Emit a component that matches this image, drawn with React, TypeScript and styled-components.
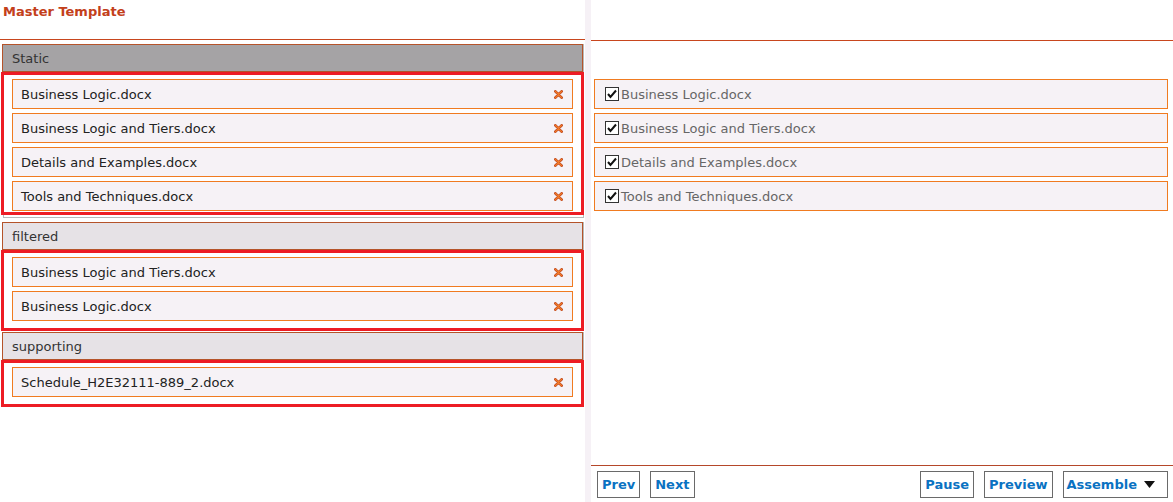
import React from "react";
import styled, { createGlobalStyle } from "styled-components";

const GlobalStyle = createGlobalStyle`
  html, body {
    margin: 0;
    padding: 0;
    background: #ffffff;
  }
  body {
    font-family: "DejaVu Sans", Verdana, sans-serif;
    font-size: 13px;
    color: #222;
  }
`;

const Page = styled.div`
  display: flex;
  height: 502px;
  width: 1173px;
  overflow: hidden;
`;

const LeftPanel = styled.div`
  width: 585px;
  flex-shrink: 0;
`;

const Divider = styled.div`
  width: 6px;
  flex-shrink: 0;
  background: #f6f1f6;
`;

const RightPanel = styled.div`
  flex: 1;
  display: flex;
  flex-direction: column;
`;

const TitleBar = styled.div`
  height: 40px;
  border-bottom: 1px solid #c8461e;
  padding: 4px 0 0 3px;
  box-sizing: border-box;
`;

const Title = styled.h1`
  margin: 0;
  font-size: 13px;
  font-weight: bold;
  color: #c3401b;
`;

const Section = styled.div<{ $first?: boolean }>`
  margin: ${(p) => (p.$first ? "4px 1px 4px 3px" : "0 1px 1px 3px")};
  padding-bottom: ${(p) => (p.$first ? "2px" : "0")};
  border-right: 1px solid #b8b8b8;
  border-left: 1px solid #b8b8b8;
  border-bottom: ${(p) => (p.$first ? "1px solid #b8b8b8" : "none")};
`;

const SectionHeader = styled.div<{ $dark?: boolean }>`
  height: 28px;
  box-sizing: border-box;
  margin-left: -2px;
  border: 1px solid #b5532a;
  background: ${(p) => (p.$dark ? "#a5a3a5" : "#e6e2e6")};
  color: #333;
  padding-left: 9px;
  display: flex;
  align-items: center;
`;

const DropBox = styled.div<{ $padBottom: number }>`
  margin: 0 -1px 0 -3px;
  border: 3px solid #ed1c24;
  padding: 4px 8px ${(p) => p.$padBottom}px 8px;
  display: flex;
  flex-direction: column;
  gap: 4px;
`;

const DocItem = styled.div`
  height: 30px;
  box-sizing: border-box;
  border: 1px solid #f07b20;
  background: #f6f2f6;
  display: flex;
  align-items: center;
  justify-content: space-between;
  padding: 0 9px 0 8px;
  color: #222;
`;

const RemoveIcon = styled.svg`
  width: 9px;
  height: 9px;
  flex-shrink: 0;
`;

const RightHeader = styled.div`
  height: 41px;
  box-sizing: border-box;
  border-bottom: 1px solid #c8461e;
`;

const CheckList = styled.div`
  flex: 1;
  padding: 38px 5px 0 3px;
  display: flex;
  flex-direction: column;
  gap: 4px;
`;

const CheckItem = styled.label`
  height: 30px;
  box-sizing: border-box;
  border: 1px solid #f07b20;
  background: #f6f2f6;
  display: flex;
  align-items: center;
  padding-left: 10px;
  gap: 2px;
  color: #666;
`;

const CheckBox = styled.svg`
  width: 14px;
  height: 14px;
  flex-shrink: 0;
`;

const Footer = styled.div`
  height: 37px;
  box-sizing: border-box;
  border-top: 1px solid #b5472a;
  display: flex;
  align-items: flex-start;
  padding: 5px 5px 0 6px;
  gap: 10px;
`;

const Spacer = styled.div`
  flex: 1;
`;

const Button = styled.button<{ $menu?: boolean }>`
  height: 27px;
  box-sizing: border-box;
  border: 1px solid #6a6a6a;
  background: #fff;
  color: #0a72c2;
  font-family: "DejaVu Sans", Verdana, sans-serif;
  font-size: 13px;
  font-weight: bold;
  padding: ${(p) => (p.$menu ? "0 12px 0 3px" : "0 4px")};
  display: flex;
  align-items: center;
  gap: 7px;
  cursor: pointer;
`;

const Caret = styled.svg`
  width: 11px;
  height: 8px;
`;

const sections = [
  {
    name: "Static",
    dark: true,
    pad: 1,
    files: [
      "Business Logic.docx",
      "Business Logic and Tiers.docx",
      "Details and Examples.docx",
      "Tools and Techniques.docx",
    ],
  },
  {
    name: "filtered",
    dark: false,
    pad: 7,
    files: ["Business Logic and Tiers.docx", "Business Logic.docx"],
  },
  {
    name: "supporting",
    dark: false,
    pad: 7,
    files: ["Schedule_H2E32111-889_2.docx"],
  },
];

const selected = [
  "Business Logic.docx",
  "Business Logic and Tiers.docx",
  "Details and Examples.docx",
  "Tools and Techniques.docx",
];

function Remove() {
  return (
    <RemoveIcon viewBox="0 0 10 10">
      <path d="M1.5 1.5 L8.5 8.5 M8.5 1.5 L1.5 8.5" stroke="#b8401c" strokeWidth="3" strokeLinecap="round" />
      <path d="M1.5 1.5 L8.5 8.5 M8.5 1.5 L1.5 8.5" stroke="#f07a2a" strokeWidth="1.6" strokeLinecap="round" />
    </RemoveIcon>
  );
}

function Check() {
  return (
    <CheckBox viewBox="0 0 14 14">
      <rect x="0.5" y="0.5" width="13" height="13" fill="#fff" stroke="#333" />
      <path d="M3 7 L5.5 10 L11 3.5" fill="none" stroke="#111" strokeWidth="2" />
    </CheckBox>
  );
}

export default function App() {
  return (
    <>
      <GlobalStyle />
      <Page>
        <LeftPanel>
          <TitleBar>
            <Title>Master Template</Title>
          </TitleBar>
          {sections.map((s, i) => (
            <Section key={s.name} $first={i === 0}>
              <SectionHeader $dark={s.dark}>{s.name}</SectionHeader>
              <DropBox $padBottom={s.pad}>
                {s.files.map((f) => (
                  <DocItem key={f}>
                    <span>{f}</span>
                    <Remove />
                  </DocItem>
                ))}
              </DropBox>
            </Section>
          ))}
        </LeftPanel>
        <Divider />
        <RightPanel>
          <RightHeader />
          <CheckList>
            {selected.map((f) => (
              <CheckItem key={f}>
                <Check />
                <span>{f}</span>
              </CheckItem>
            ))}
          </CheckList>
          <Footer>
            <Button>Prev</Button>
            <Button>Next</Button>
            <Spacer />
            <Button>Pause</Button>
            <Button>Preview</Button>
            <Button $menu>
              Assemble
              <Caret viewBox="0 0 11 8">
                <path d="M0 0 H11 L5.5 7 Z" fill="#111" />
              </Caret>
            </Button>
          </Footer>
        </RightPanel>
      </Page>
    </>
  );
}
